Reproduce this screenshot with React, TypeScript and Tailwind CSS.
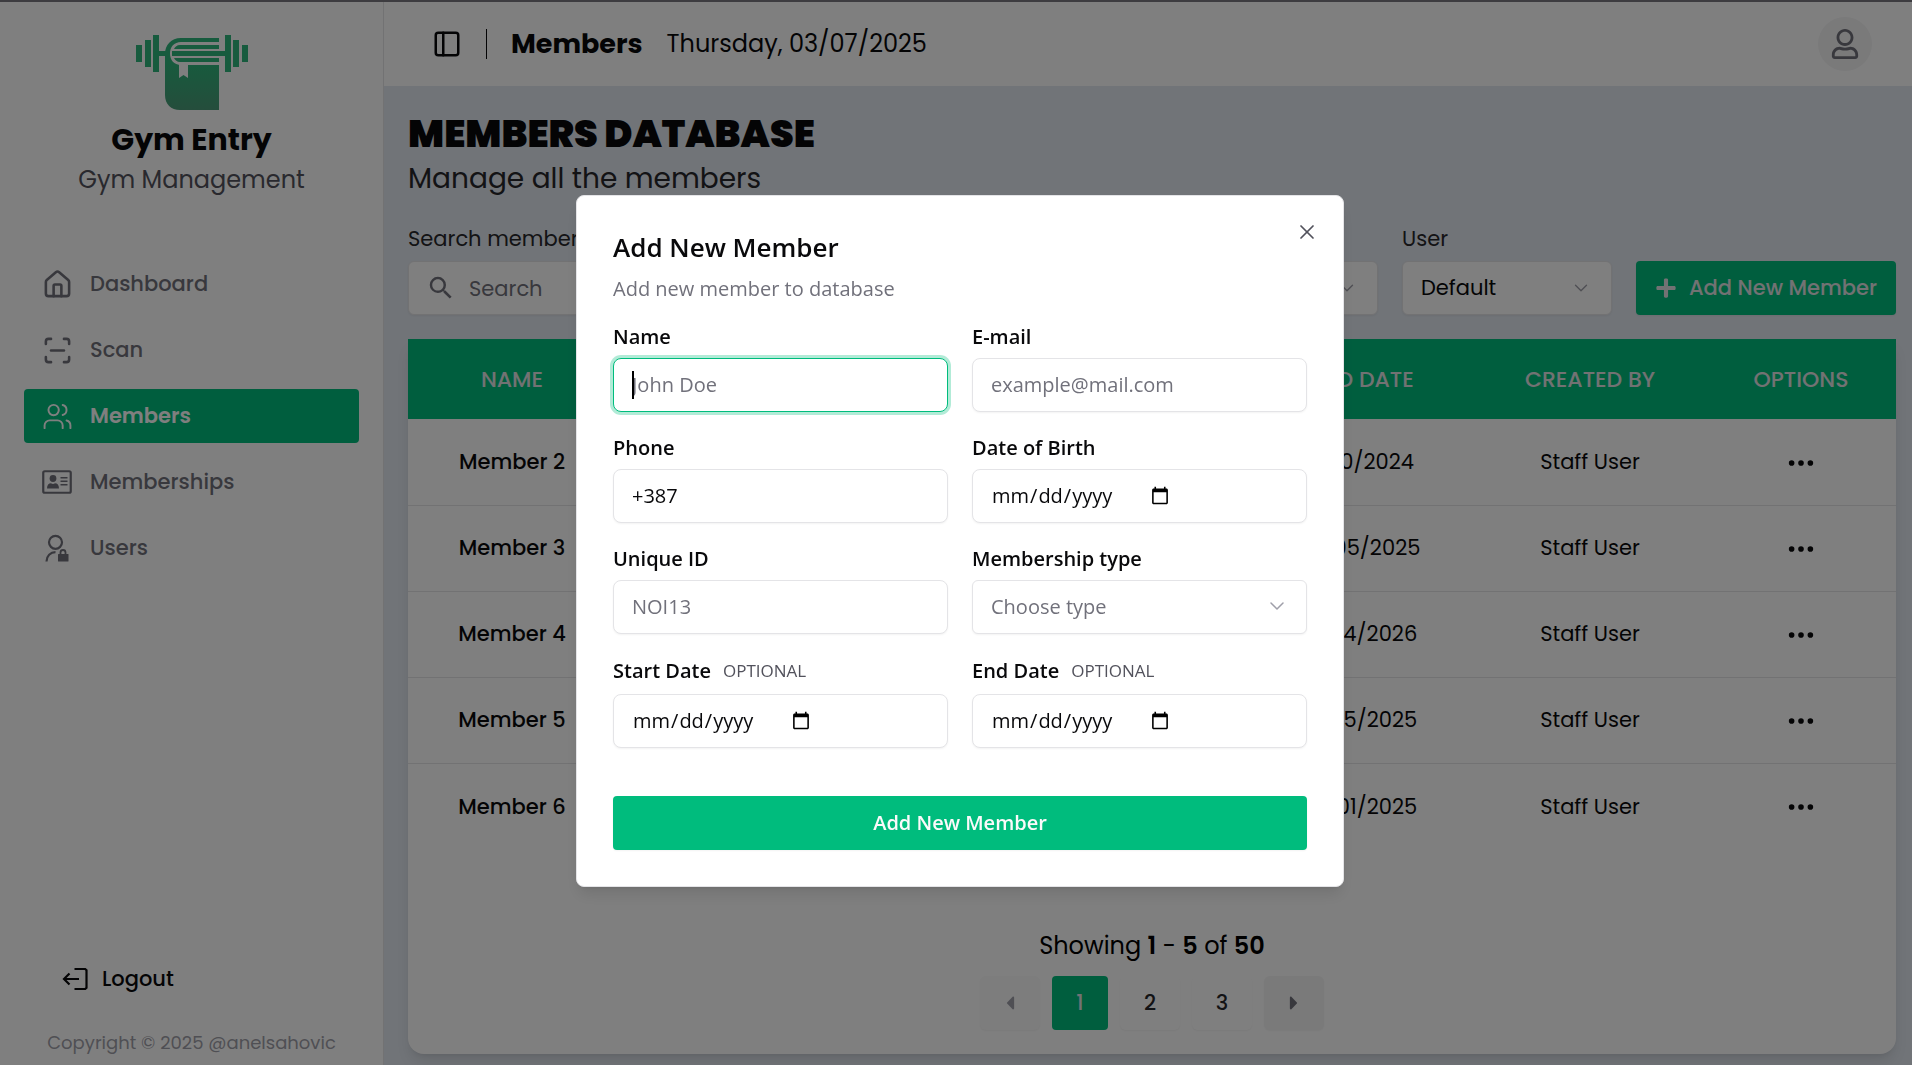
import type { ReactNode } from "react";
import { ChevronDown, House, PanelLeft, ScanLine, Users, X } from "lucide-react";
import { BsThreeDots } from "react-icons/bs";
import { FaCaretLeft, FaCaretRight, FaPlus, FaRegUser } from "react-icons/fa";
import { MdSearch } from "react-icons/md";

const members = [
  { name: "Member 2", endDate: "11/10/2024", createdBy: "Staff User" },
  { name: "Member 3", endDate: "01/05/2025", createdBy: "Staff User" },
  { name: "Member 4", endDate: "11/04/2026", createdBy: "Staff User" },
  { name: "Member 5", endDate: "11/05/2025", createdBy: "Staff User" },
  { name: "Member 6", endDate: "01/01/2025", createdBy: "Staff User" },
];

function Logo() {
  return (
    <svg width="112" height="75" viewBox="0 0 112 75" className="mx-auto" aria-hidden="true">
      <defs>
        <linearGradient id="towel" x1="0" y1="0" x2="0" y2="1">
          <stop offset="0.35" stopColor="#2fb67c" />
          <stop offset="1" stopColor="#4a9b78" />
        </linearGradient>
      </defs>
      <g fill="#2fb67c">
        <rect x="0" y="10" width="6" height="17" />
        <rect x="9" y="5" width="6" height="27" />
        <rect x="17" y="0" width="6" height="37" />
        <rect x="23" y="16" width="7" height="5" />
        <rect x="89" y="0" width="6" height="37" />
        <rect x="97" y="5" width="6" height="27" />
        <rect x="106" y="10" width="6" height="17" />
      </g>
      <path
        d="M83 3H45C35 3 29 10 29 19V60C29 69 35 75 44 75H83V30H45C38 30 34 25 34 18.500C34 12 38 7 45 7H83Z"
        fill="url(#towel)"
      />
      <path d="M83 10H44C41 10 39 12 38 14H83Z" fill="#2fb67c" />
      <path d="M36 16H90V21H36Z" fill="#2fb67c" />
      <path d="M38 23H83V27H44C41 27 39 25 38 23Z" fill="#2fb67c" />
      <path d="M43 29H52V43L47.500 40L43 43Z" fill="#fff" />
    </svg>
  );
}

function CardIcon() {
  return (
    <svg width="30" height="24" viewBox="0 0 30 24" fill="currentColor" aria-hidden="true">
      <rect x="1.250" y="1.250" width="27.500" height="21.500" rx="1.500" fill="none" stroke="currentColor" strokeWidth="2.200" />
      <circle cx="11" cy="8.500" r="3.400" />
      <path d="M5 18.500c0-3.500 1.700-5.200 4-5.200 1.200.8 2.800.8 4 0 2.300 0 4 1.700 4 5.200Z" />
      <path d="M18.500 7h7v1.400h-7zM18.500 10.500h7v1.400h-7zM18.500 14h7v1.400h-7z" />
    </svg>
  );
}

function UserLockIcon() {
  return (
    <svg width="24" height="28" viewBox="0 0 24 28" fill="none" stroke="currentColor" strokeWidth="2.200" aria-hidden="true">
      <circle cx="10.500" cy="8.300" r="6.500" />
      <path d="M1.500 27.500C1.500 22 5.500 18.200 10.500 18.200" />
      <path d="M15.500 21V18.500a2.500 2.500 0 0 1 5 0V21" strokeWidth="1.800" />
      <rect x="13" y="20" width="10.500" height="7.500" rx="0.500" fill="currentColor" stroke="none" />
    </svg>
  );
}

function LogoutIcon() {
  return (
    <svg width="26" height="24" viewBox="0 0 26 24" fill="none" stroke="currentColor" strokeWidth="2.200" aria-hidden="true">
      <path d="M12.500 2H23.200L24.500 3.300V20.700L23.200 22H12.500" />
      <path d="M17 12H2M7.500 6.500L2 12l5.500 5.500" />
    </svg>
  );
}

function NavItem({ icon, label, active }: { icon: ReactNode; label: string; active?: boolean }) {
  return (
    <a
      href="#"
      className={
        active
          ? "flex h-[54px] items-center gap-4 rounded bg-emerald-500 px-4 text-[21px] font-semibold text-white"
          : "flex h-[54px] items-center gap-4 rounded px-4 text-[21px] font-medium text-zinc-500"
      }
    >
      <span className="flex w-[34px] justify-center">{icon}</span>
      {label}
    </a>
  );
}

function Sidebar() {
  return (
    <aside className="flex w-96 shrink-0 flex-col border-r border-zinc-200 bg-white px-6 pt-[33px] text-zinc-950">
      <div className="text-center">
        <Logo />
        <h1 className="mt-3 text-[30px] leading-9 font-bold">Gym Entry</h1>
        <p className="mt-1 text-2xl leading-9 text-zinc-600">Gym Management</p>
      </div>
      <nav className="mt-[59px] flex flex-col gap-3">
        <NavItem icon={<House size={31} strokeWidth={2} />} label="Dashboard" />
        <NavItem icon={<ScanLine size={31} strokeWidth={2} />} label="Scan" />
        <NavItem icon={<Users size={31} strokeWidth={1.5} />} label="Members" active />
        <NavItem icon={<CardIcon />} label="Memberships" />
        <NavItem icon={<UserLockIcon />} label="Users" />
      </nav>
      <button className="mt-auto flex items-center gap-[14px] self-start px-[38px] text-[21px] leading-7 font-medium">
        <LogoutIcon />
        Logout
      </button>
      <p className="mt-9 mb-2 text-center text-lg text-zinc-400">Copyright © 2025 @anelsahovic</p>
    </aside>
  );
}

function FilterSelect({ id, label }: { id: string; label: string }) {
  return (
    <div className="w-[210px]">
      <label htmlFor={id} className="block text-[21px] leading-7 text-zinc-800">
        {label}
      </label>
      <div className="relative mt-2">
        <select id={id} className="h-[54px] w-full appearance-none rounded-md border border-zinc-200 bg-white px-[18px] text-[21px] text-zinc-950 shadow-xs">
          <option>Default</option>
        </select>
        <ChevronDown size={22} strokeWidth={1.5} className="pointer-events-none absolute top-4 right-5 text-zinc-400" />
      </div>
    </div>
  );
}

function MembersTable() {
  return (
    <section className="mt-6 flex grow flex-col rounded-b-2xl bg-white shadow-lg">
      <table className="w-full table-fixed text-center text-[21px] text-zinc-950">
        <colgroup>
          <col className="w-[208px]" />
          <col />
          <col className="w-[224px]" />
          <col className="w-[232px]" />
          <col className="w-[190px]" />
        </colgroup>
        <thead>
          <tr className="h-20 bg-emerald-500 text-[22px] text-zinc-200 uppercase">
            <th className="font-medium">Name</th>
            <th />
            <th className="font-medium">End date</th>
            <th className="font-medium">Created by</th>
            <th className="font-medium">Options</th>
          </tr>
        </thead>
        <tbody>
          {members.map((member) => (
            <tr key={member.name} className="h-[86px] border-b border-zinc-200 last:border-0">
              <td className="font-medium">{member.name}</td>
              <td />
              <td>{member.endDate}</td>
              <td>{member.createdBy}</td>
              <td>
                <button aria-label="Options" className="align-middle">
                  <BsThreeDots size={30} />
                </button>
              </td>
            </tr>
          ))}
        </tbody>
      </table>
      <div className="mt-auto mb-6 flex flex-col items-center">
        <p className="text-2xl leading-8">
          Showing <b className="font-semibold">1</b> - <b className="font-semibold">5</b> of{" "}
          <b className="font-semibold">50</b>
        </p>
        <div className="mt-[14px] flex gap-3 text-[21px] font-medium">
          <button aria-label="Previous page" className="flex h-[54px] w-[60px] items-center justify-center rounded-md bg-zinc-50 text-zinc-400 shadow-xs">
            <FaCaretLeft size={22} />
          </button>
          <button className="h-[54px] w-14 rounded bg-emerald-500 text-zinc-200">1</button>
          <button className="h-[54px] w-[60px] rounded-md bg-white text-zinc-800 shadow-xs">2</button>
          <button className="h-[54px] w-[60px] rounded-md bg-white text-zinc-800 shadow-xs">3</button>
          <button aria-label="Next page" className="flex h-[54px] w-[60px] items-center justify-center rounded-md bg-zinc-100 text-zinc-500 shadow-xs">
            <FaCaretRight size={22} />
          </button>
        </div>
      </div>
    </section>
  );
}

function Field({ id, label, optional, children }: { id: string; label: string; optional?: boolean; children: ReactNode }) {
  return (
    <div className="flex flex-col gap-[7px]">
      <label
        htmlFor={id}
        className={
          optional
            ? "flex h-[31px] items-center gap-3 text-xl font-semibold"
            : "flex h-7 items-center text-xl font-semibold"
        }
      >
        {label}
        {optional && <span className="text-[17px] font-medium text-zinc-600">OPTIONAL</span>}
      </label>
      {children}
    </div>
  );
}

const inputClass =
  "h-[54px] w-full rounded-lg border border-zinc-200 bg-white px-[18px] text-xl text-zinc-950 shadow-xs outline-none placeholder:text-zinc-500";
const dateClass = `${inputClass} [&::-webkit-datetime-edit]:flex-none [&::-webkit-calendar-picker-indicator]:ml-1.5`;

function AddMemberDialog() {
  return (
    <div className="fixed inset-0 flex items-center justify-center bg-black/50 pt-4 pl-2">
      <div
        role="dialog"
        aria-labelledby="dialog-title"
        className="relative w-full max-w-3xl rounded-lg border border-zinc-200 bg-white p-9 pt-[31px] font-['Open_Sans',sans-serif] text-zinc-950 shadow-lg"
      >
        <button aria-label="Close" className="absolute top-6 right-6 text-zinc-600">
          <X size={24} strokeWidth={1.75} />
        </button>
        <h2 id="dialog-title" className="text-[26px] leading-10 font-semibold">
          Add New Member
        </h2>
        <p className="mt-2 text-xl text-zinc-500">Add new member to database</p>
        <form className="mt-5">
          <div className="grid grid-cols-2 gap-x-6 gap-y-[22px]">
            <Field id="name" label="Name">
              <div className="relative">
                <input
                  id="name"
                  autoFocus
                  placeholder="John Doe"
                  className="h-[54px] w-full rounded-lg border border-emerald-500 bg-white px-[18px] text-xl text-zinc-950 caret-transparent ring-3 ring-emerald-500/30 outline-none placeholder:text-zinc-500"
                />
                {/* text cursor */}
                <span className="pointer-events-none absolute top-[13px] left-[19px] h-7 w-0.5 bg-black" />
              </div>
            </Field>
            <Field id="email" label="E-mail">
              <input id="email" type="email" placeholder="example@mail.com" className={inputClass} />
            </Field>
            <Field id="phone" label="Phone">
              <input id="phone" type="tel" defaultValue="+387" className={inputClass} />
            </Field>
            <Field id="birth" label="Date of Birth">
              <input id="birth" type="date" className={dateClass} />
            </Field>
            <Field id="unique" label="Unique ID">
              <input id="unique" placeholder="NOI13" className={inputClass} />
            </Field>
            <Field id="type" label="Membership type">
              <div className="relative">
                <select
                  id="type"
                  className="h-[54px] w-full appearance-none rounded-md border border-zinc-200 bg-white px-[18px] text-xl text-zinc-500 shadow-xs outline-none"
                >
                  <option>Choose type</option>
                </select>
                <ChevronDown size={24} strokeWidth={1.5} className="pointer-events-none absolute top-[14px] right-[18px] text-zinc-400" />
              </div>
            </Field>
            <Field id="start" label="Start Date" optional>
              <input id="start" type="date" className={dateClass} />
            </Field>
            <Field id="end" label="End Date" optional>
              <input id="end" type="date" className={dateClass} />
            </Field>
          </div>
          <button type="button" className="mt-12 h-[54px] w-full rounded bg-emerald-500 text-xl font-semibold text-zinc-50 shadow-xs">
            Add New Member
          </button>
        </form>
      </div>
    </div>
  );
}

export default function App() {
  return (
    <div className="flex min-h-screen border-t-2 border-[#7b7880] bg-slate-200 font-['Poppins','Inter',sans-serif]">
      <Sidebar />
      <div className="flex grow flex-col">
        <header className="flex h-[84px] items-center bg-white pr-10 pl-12 text-zinc-950">
          <button aria-label="Toggle sidebar">
            <PanelLeft size={30} strokeWidth={2} />
          </button>
          <div className="ml-6 h-[30px] w-px bg-zinc-950" />
          <h2 className="ml-6 text-[27px] font-bold">Members</h2>
          <p className="ml-6 text-2xl">Thursday, 03/07/2025</p>
          <button aria-label="Account" className="ml-auto flex size-[54px] items-center justify-center rounded-full bg-zinc-100 text-zinc-500">
            <FaRegUser size={30} />
          </button>
        </header>
        <main className="flex grow flex-col px-6 pr-4 pt-7 pb-[11px]">
          <h1 className="text-[38px] leading-10 font-black text-zinc-950">MEMBERS DATABASE</h1>
          <p className="mt-[5px] text-[28px] leading-10 text-zinc-800">Manage all the members</p>
          <div className="mt-[26px] flex items-end gap-6">
            <div className="grow">
              <label htmlFor="search" className="block text-[21px] leading-7 text-zinc-800">
                Search members
              </label>
              <div className="relative mt-2">
                <MdSearch size={30} className="absolute top-3 left-[18px] text-zinc-500" />
                <input
                  id="search"
                  placeholder="Search"
                  className="h-[54px] w-full rounded-md border border-zinc-200 bg-white pl-[60px] text-[21px] shadow-xs placeholder:text-zinc-500"
                />
              </div>
            </div>
            <FilterSelect id="membership" label="Membership" />
            <FilterSelect id="user" label="User" />
            <button className="flex h-[54px] w-[260px] items-center justify-center gap-3 rounded bg-emerald-500 text-[21px] font-medium text-zinc-200 shadow-xs">
              <FaPlus size={22} />
              Add New Member
            </button>
          </div>
          <MembersTable />
        </main>
      </div>
      <AddMemberDialog />
    </div>
  );
}
